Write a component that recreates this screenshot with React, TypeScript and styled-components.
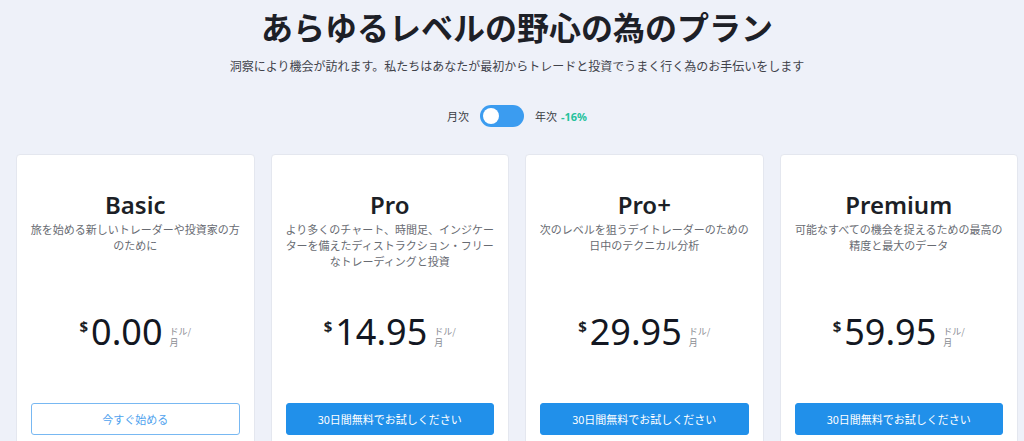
import { useState } from "react";
import styled, { createGlobalStyle } from "styled-components";

const GlobalStyle = createGlobalStyle`
  html, body {
    margin: 0;
    padding: 0;
    background: #eef1f9;
    font-family: "Noto Sans", "Noto Sans CJK JP", sans-serif;
    color: #1c1f26;
  }
  * {
    box-sizing: border-box;
  }
`;

const Page = styled.div`
  width: 100%;
  height: 441px;
  overflow: hidden;
  padding: 0 6px 0 16px;
`;

const Header = styled.header`
  display: flex;
  flex-direction: column;
  align-items: center;
`;

const Title = styled.h1`
  margin: 0;
  padding-top: 6px;
  font-family: "Noto Sans CJK JP", sans-serif;
  font-size: 32px;
  font-weight: 700;
  line-height: 40px;
  color: #1d2027;
`;

const Subtitle = styled.p`
  margin: 12px 0 0;
  font-family: "Noto Sans CJK JP", sans-serif;
  font-size: 12px;
  line-height: 16px;
  color: #3f424a;
`;

const ToggleRow = styled.div`
  display: flex;
  align-items: center;
  gap: 11px;
  margin-top: 31px;
  font-family: "Noto Sans CJK JP", sans-serif;
  font-size: 11px;
  color: #3a3d44;
`;

const Switch = styled.button<{ $on: boolean }>`
  width: 44px;
  height: 22px;
  padding: 3px;
  border: none;
  border-radius: 11px;
  background: #3b9cf0;
  display: flex;
  justify-content: ${(p) => (p.$on ? "flex-end" : "flex-start")};
  cursor: pointer;
`;

const Knob = styled.span`
  width: 16px;
  height: 16px;
  border-radius: 50%;
  background: #fff;
`;

const Discount = styled.span`
  margin-left: 4px;
  font-family: "Noto Sans", sans-serif;
  font-weight: 700;
  color: #25c29c;
`;

const Grid = styled.div`
  display: grid;
  grid-template-columns: repeat(4, 1fr);
  gap: 16px;
  margin-top: 27px;
`;

const Card = styled.div`
  display: flex;
  flex-direction: column;
  height: 300px;
  padding: 34px 14px 0;
  background: #fff;
  border: 1px solid #e4e7ef;
  border-radius: 4px;
`;

const PlanName = styled.h2`
  margin: 0;
  text-align: center;
  font-size: 24px;
  font-weight: 600;
  line-height: 32px;
  color: #1c1f26;
`;

const Description = styled.p`
  margin: 0 -4px;
  height: 64px;
  text-align: center;
  font-family: "Noto Sans CJK JP", sans-serif;
  font-size: 11px;
  line-height: 16px;
  color: #686b72;
`;

const PriceRow = styled.div`
  display: flex;
  justify-content: center;
  align-items: flex-start;
  height: 44px;
  margin-top: 25px;
`;

const Currency = styled.span`
  margin-top: 7px;
  margin-right: 3px;
  font-size: 15px;
  font-weight: 700;
  line-height: 18px;
  color: #1c1f26;
`;

const Amount = styled.span`
  font-size: 36px;
  font-weight: 400;
  line-height: 44px;
  color: #131722;
`;

const Unit = styled.span`
  margin-top: 16px;
  margin-left: 7px;
  font-family: "Noto Sans CJK JP", sans-serif;
  font-size: 9px;
  line-height: 11px;
  color: #8a8d93;
`;

const ActionButton = styled.button<{ $outline?: boolean }>`
  margin-top: 49px;
  height: 32px;
  width: 100%;
  border-radius: 3px;
  font-family: "Noto Sans CJK JP", sans-serif;
  font-size: 11px;
  cursor: pointer;
  border: 1px solid ${(p) => (p.$outline ? "#78b8f2" : "#2190ea")};
  background: ${(p) => (p.$outline ? "#fff" : "#2190ea")};
  color: ${(p) => (p.$outline ? "#4ea2ee" : "#fff")};
`;

type Plan = {
  name: string;
  description: string;
  price: string;
  cta: string;
  outline?: boolean;
};

const plans: Plan[] = [
  {
    name: "Basic",
    description: "旅を始める新しいトレーダーや投資家の方のために",
    price: "0.00",
    cta: "今すぐ始める",
    outline: true,
  },
  {
    name: "Pro",
    description:
      "より多くのチャート、時間足、インジケーターを備えたディストラクション・フリーなトレーディングと投資",
    price: "14.95",
    cta: "30日間無料でお試しください",
  },
  {
    name: "Pro+",
    description: "次のレベルを狙うデイトレーダーのための日中のテクニカル分析",
    price: "29.95",
    cta: "30日間無料でお試しください",
  },
  {
    name: "Premium",
    description: "可能なすべての機会を捉えるための最高の精度と最大のデータ",
    price: "59.95",
    cta: "30日間無料でお試しください",
  },
];

export default function App() {
  const [yearly, setYearly] = useState(false);

  return (
    <Page>
      <GlobalStyle />
      <Header>
        <Title>あらゆるレベルの野心の為のプラン</Title>
        <Subtitle>
          洞察により機会が訪れます。私たちはあなたが最初からトレードと投資でうまく行く為のお手伝いをします
        </Subtitle>
        <ToggleRow>
          <span>月次</span>
          <Switch $on={yearly} onClick={() => setYearly((v) => !v)} aria-label="billing period">
            <Knob />
          </Switch>
          <span>
            年次<Discount>-16%</Discount>
          </span>
        </ToggleRow>
      </Header>

      <Grid>
        {plans.map((plan) => (
          <Card key={plan.name}>
            <PlanName>{plan.name}</PlanName>
            <Description>{plan.description}</Description>
            <PriceRow>
              <Currency>$</Currency>
              <Amount>{plan.price}</Amount>
              <Unit>
                ドル/
                <br />月
              </Unit>
            </PriceRow>
            <ActionButton $outline={plan.outline}>{plan.cta}</ActionButton>
          </Card>
        ))}
      </Grid>
    </Page>
  );
}
